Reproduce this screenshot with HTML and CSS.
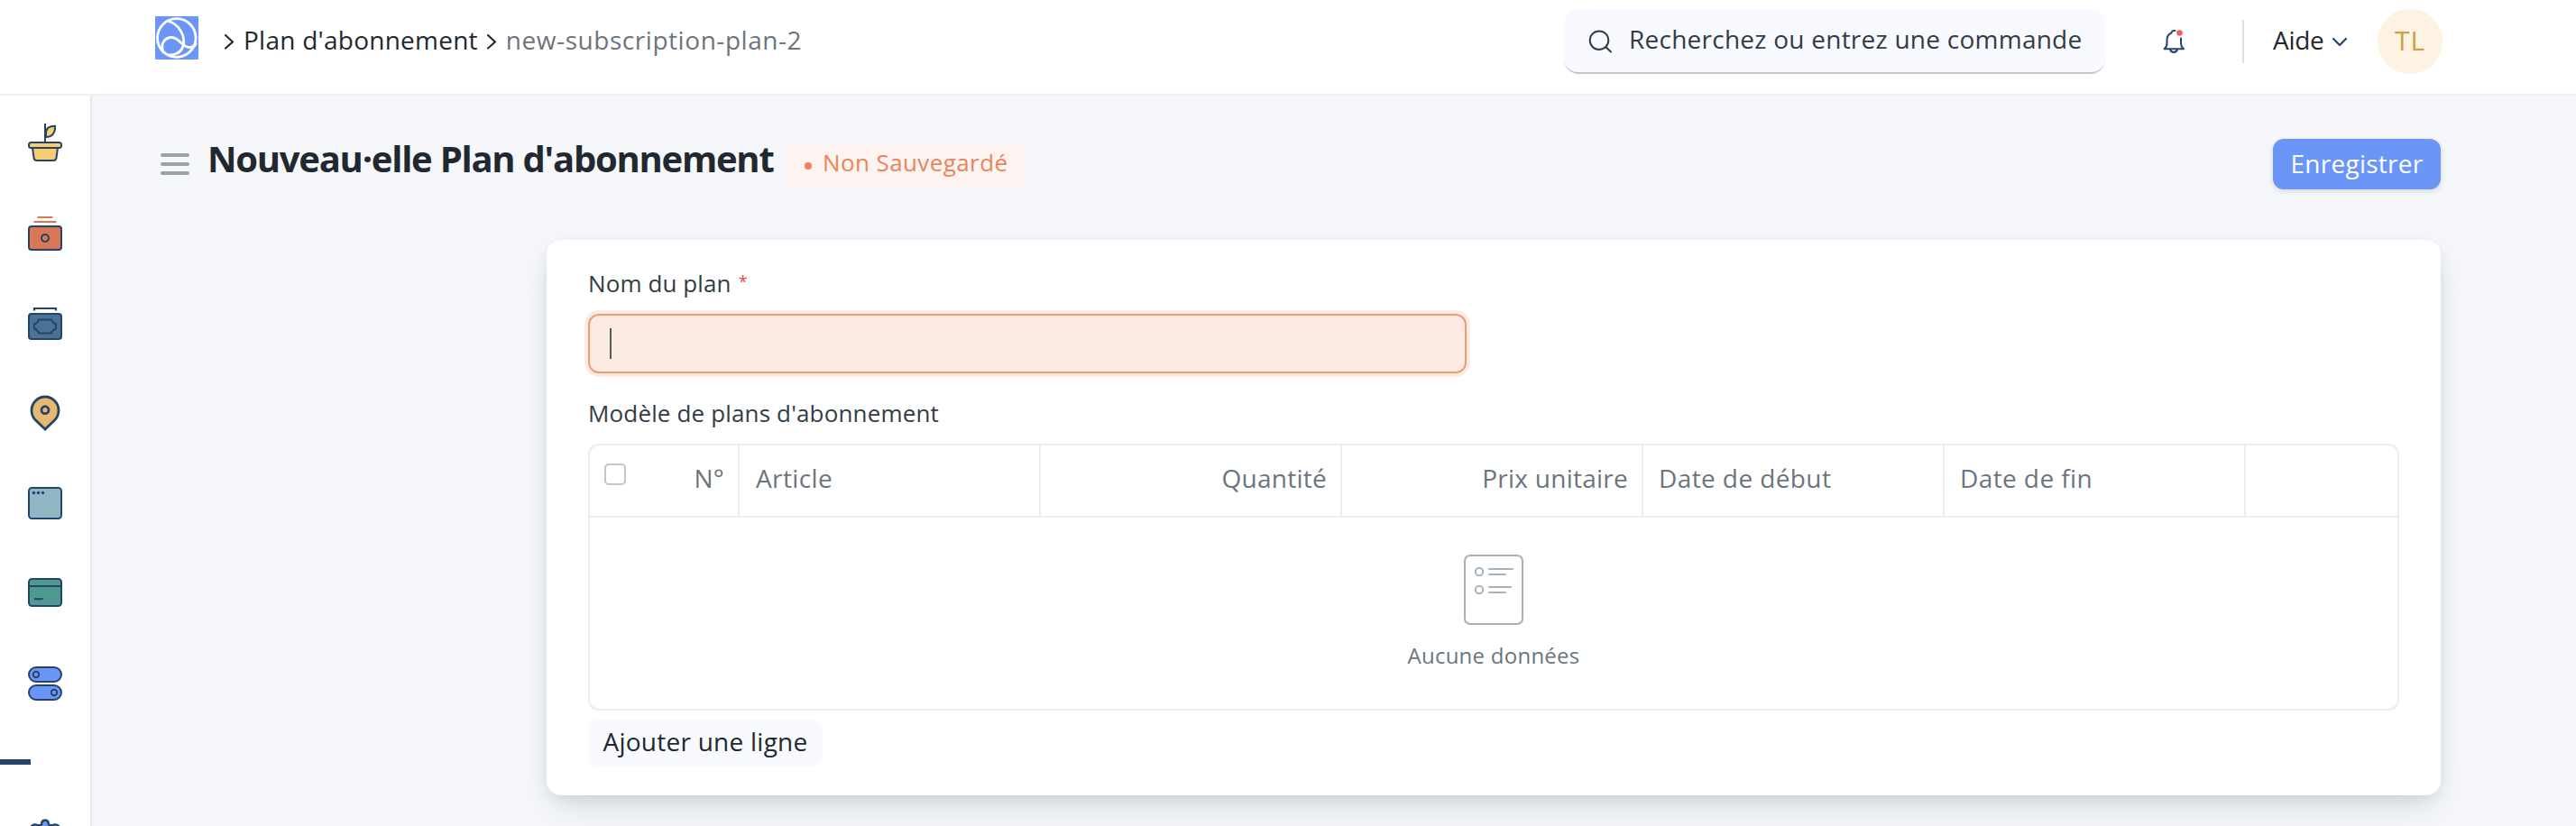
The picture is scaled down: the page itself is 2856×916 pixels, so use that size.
FILE: index.html
```html
<!DOCTYPE html>
<html lang="fr">
<head>
<meta charset="utf-8">
<title>Plan d'abonnement</title>
<link rel="stylesheet" href="styles.css">
</head>
<body>
<header class="navbar">
  <svg class="logo" viewBox="172 18 48 48"><rect x="172" y="18" width="48" height="48" rx="1" fill="#6c95f8"/><g fill="none" stroke="#fff" stroke-width="2.8" stroke-linecap="round"><circle cx="195.800" cy="42" r="21.300"/><path d="M187 23.500C199 27 205 40 203.500 49C202 57 196 61 187 61"/><path d="M181 58C177 47 184 41.500 190 41.500C199 41.500 202 52.500 210 52.500C213 52.500 216 51 217 49"/></g></svg>
  <nav class="crumbs">
    <svg class="crumb-arrow" viewBox="0 0 12 18"><path d="M2 2L10 9.500L2 16.500"/></svg>
    <span class="t crumb-link">Plan d'abonnement</span>
    <svg class="crumb-arrow" viewBox="0 0 12 18"><path d="M2 2L10 9.500L2 16.500"/></svg>
    <span class="t crumb-current">new-subscription-plan-2</span>
  </nav>
  <div class="search">
    <svg class="search-icon" viewBox="1761 33 26 26"><circle cx="1773" cy="44.700" r="10.300"/><path d="M1780.500 52.200L1786 57.500"/></svg>
    <span class="t search-text">Recherchez ou entrez une commande</span>
  </div>
  <svg class="bell" viewBox="2396 30 28 32"><path d="M2411.500 34C2409 33.500 2407.500 35 2407.500 36.500C2404 38 2402.500 41 2402.500 44V48.500C2402.500 51 2401 53 2399.500 54.200H2421C2419 52.500 2418 50.500 2418 48.500V42.500M2406 54.500C2406.500 57 2408.500 58 2410 58C2412 58 2413.500 57 2414 54.500"/><circle class="bell-dot" cx="2416.500" cy="36.500" r="3.300"/></svg>
  <span class="divider"></span>
  <div class="help"><span class="t help-text">Aide</span><svg class="help-arrow" viewBox="0 0 18 12"><path d="M2 2L9 9L16 2"/></svg></div>
  <div class="avatar"><span class="t avatar-text">TL</span></div>
</header>
<div class="shell">
  <aside class="sidebar">
    <svg class="side-icon" viewBox="0 106 100 100"><g fill="#f7cd6d" stroke="#24446a" stroke-width="2"><path d="M50 137V158" stroke-linecap="butt"/><path d="M51 152V147C51 142 55 139.500 61 139.700C61.500 147 58 152 51 152Z"/><path d="M36 164H64L62.500 175Q62 178 59 178H41Q38 178 37.500 175Z"/><rect x="32" y="158" width="36" height="6" rx="2.500"/></g></svg>
    <svg class="side-icon" viewBox="0 206 100 100"><path d="M41.500 241H58.500M37.500 246H62.500" stroke="#d97757" stroke-width="2"/><rect x="32" y="251" width="36" height="26" rx="3" fill="#d97757" stroke="#24446a" stroke-width="2"/><circle cx="50" cy="264" r="4" fill="none" stroke="#24446a" stroke-width="2"/></svg>
    <svg class="side-icon" viewBox="0 306 100 100"><path d="M38 344.500V342H62V344.500" fill="none" stroke="#24446a" stroke-width="2.200"/><rect x="32" y="348" width="36" height="28" rx="3" fill="#4a7295" stroke="#24446a" stroke-width="2"/><path d="M43 354.500H57Q58 358 62 359.500V364.500Q58 366 57 369.500H43Q42 366 38 364.500V359.500Q42 358 43 354.500Z" fill="none" stroke="#24446a" stroke-width="2"/></svg>
    <svg class="side-icon" viewBox="0 406 100 100"><path d="M50 476L39 465.500C35.500 462 35 458 35 455A15 15 0 0 1 65 455C65 458 64.500 462 61 465.500Z" fill="#e6b872" stroke="#24446a" stroke-width="2.800"/><circle cx="50" cy="454.700" r="4" fill="none" stroke="#24446a" stroke-width="2.800"/></svg>
    <svg class="side-icon" viewBox="0 506 100 100"><rect x="32" y="541" width="36" height="34" rx="3.500" fill="#90b6c4" stroke="#24446a" stroke-width="2"/><g fill="#24446a"><circle cx="37.500" cy="546.500" r="1.700"/><circle cx="42.500" cy="546.500" r="1.700"/><circle cx="47.500" cy="546.500" r="1.700"/></g></svg>
    <svg class="side-icon" viewBox="0 606 100 100"><rect x="32" y="642" width="36" height="30" rx="3.500" fill="#4f9a8e" stroke="#24446a" stroke-width="2"/><path d="M32 650H68M38 664.300H47.500" stroke="#24446a" stroke-width="2"/></svg>
    <svg class="side-icon" viewBox="0 706 100 100"><g fill="#6c95f8" stroke="#24446a" stroke-width="2"><rect x="32" y="740" width="36" height="16" rx="8"/><rect x="32" y="760" width="36" height="16" rx="8"/><circle cx="40" cy="748" r="3.200"/><circle cx="60" cy="768" r="3.200"/></g></svg>
    <svg class="side-icon" viewBox="0 806 100 100"><rect x="0" y="842" width="34" height="6" fill="#24446a"/></svg>
    <svg class="side-icon side-cut" viewBox="0 906 100 10"><path d="M33 922Q34 913.500 40 914.500Q43 916 46 914.500Q46 909.500 50 909.500Q54 909.500 54 914.500Q57 916 60 914.500Q66 913.500 67 922Z" fill="#6c95f8" stroke="#24446a" stroke-width="2.400"/></svg>
  </aside>
  <main class="main">
    <div class="page-head">
      <svg class="menu" viewBox="178 169 32 26"><path d="M180 172H208M180 182H208M180 192H208"/></svg>
      <h1 class="t title">Nouveau·elle Plan d'abonnement</h1>
      <div class="badge"><span class="dot"></span><span class="t badge-text">Non Sauvegardé</span></div>
      <button class="save"><span class="t save-text">Enregistrer</span></button>
    </div>
    <section class="card">
      <div class="label"><span class="t label-name">Nom du plan</span><span class="required">*</span></div>
      <div class="input"><span class="caret"></span></div>
      <div class="label"><span class="t label-model">Modèle de plans d'abonnement</span></div>
      <div class="table">
        <div class="row">
          <div class="cell cell-first"><span class="checkbox"></span><span class="t c-num">N°</span></div>
          <div class="cell"><span class="t c-item">Article</span></div>
          <div class="cell cell-right"><span class="t c-qty">Quantité</span></div>
          <div class="cell cell-right"><span class="t c-price">Prix unitaire</span></div>
          <div class="cell"><span class="t c-start">Date de début</span></div>
          <div class="cell"><span class="t c-end">Date de fin</span></div>
          <div class="cell cell-last"></div>
        </div>
        <div class="empty">
          <svg class="empty-icon" viewBox="1623 615 66 78"><rect x="1624" y="616" width="64" height="76" rx="6"/><circle cx="1640" cy="634" r="4.200"/><circle cx="1640" cy="654" r="4.200"/><path d="M1651 631H1677M1651 637H1669M1651 651H1675M1651 657H1669"/></svg>
          <span class="t empty-text">Aucune données</span>
        </div>
      </div>
      <button class="add"><span class="t add-text">Ajouter une ligne</span></button>
    </section>
  </main>
</div>
</body>
</html>
```
FILE: styles.css
```css
* { box-sizing: border-box; }
body { margin: 0; height: 916px; overflow: hidden; background: #f5f7fb; color: #22282f; font-family: "Open Sans", "Noto Sans", sans-serif; font-size: 28px; line-height: 38px; }
svg { display: block; flex: none; }
button { font: inherit; border: 0; margin: 0; }
.t { white-space: nowrap; letter-spacing: 0.25px; }
.navbar { display: flex; align-items: flex-start; height: 106px; padding: 10px 148px 0 172px; background: #fff; border-bottom: 2px solid #edf2f6; }
.logo { width: 48px; height: 48px; margin-top: 8px; }
.crumbs { display: flex; align-items: center; height: 68px; margin-left: 28px; }
.crumb-arrow { width: 12px; height: 18px; margin-top: 4px; fill: none; stroke: #22282f; stroke-width: 2.1; stroke-linecap: round; stroke-linejoin: round; }
.crumb-link { margin: 0 9px 0 10px; }
.crumb-current { margin-left: 10px; color: #6c757d; letter-spacing: 0.55px; }
.search { display: flex; align-items: center; width: 600px; height: 72px; margin-left: auto; padding: 0 27px 4px; background: #f9faff; border-bottom: 2px solid #c0c6cc; border-radius: 16px; color: #333c44; }
.search-icon { width: 26px; height: 26px; margin-top: 6px; fill: none; stroke: #333c44; stroke-width: 2; stroke-linecap: round; }
.search-text { margin-left: 19px; }
.bell { width: 28px; height: 32px; margin: 20px 62px 0 62px; fill: none; stroke: #24446a; stroke-width: 2; stroke-linejoin: round; stroke-linecap: round; }
.bell-dot { fill: #f0605c; stroke: none; }
.divider { width: 2px; height: 48px; margin-top: 12px; background: #dcdfe3; }
.help { display: flex; align-items: center; width: 116px; height: 68px; margin-left: 32px; }
.help-text { letter-spacing: -0.3px; }
.help-arrow { width: 18px; height: 12px; margin: 5px 0 0 9px; fill: none; stroke: #24446a; stroke-width: 2.2; stroke-linecap: round; stroke-linejoin: round; }
.avatar { display: flex; align-items: center; justify-content: center; width: 72px; height: 72px; padding-bottom: 2px; border-radius: 50%; background: #fcf3e3; color: #d1a043; font-size: 30px; }
.avatar-text { letter-spacing: 1px; }
.shell { display: flex; height: 810px; }
.sidebar { width: 102px; flex: none; background: #fff; border-right: 2px solid #e6e9ee; overflow: hidden; }
.side-icon { width: 100px; height: 100px; }
.side-cut { height: 10px; }
.main { flex: 1; padding: 48px 150px 0 76px; }
.page-head { display: flex; align-items: flex-start; height: 112px; }
.menu { width: 32px; height: 26px; margin-top: 15px; fill: none; stroke: #9aa1a8; stroke-width: 4; stroke-linecap: round; }
.title { width: 627px; margin: 0 0 0 20px; font-size: 40px; line-height: 44px; font-weight: 700; letter-spacing: -1.25px; }
.badge { display: flex; align-items: center; width: 266px; height: 48px; margin: 6px 0 0 15px; padding: 0 20px; border-radius: 12px; background: #fdf4f1; color: #e98559; font-size: 26px; }
.dot { flex: none; width: 8px; height: 8px; border-radius: 50%; background: #ed8456; }
.badge-text { margin-left: 12px; padding-bottom: 8px; letter-spacing: 0.4px; }
.save { width: 186px; height: 56px; margin-left: auto; padding: 0 0 2px; border-radius: 12px; background: #6c95f8; color: #fff; box-shadow: 0 2px 6px rgba(25, 39, 52, 0.15); }
.card { width: 2100px; height: 616px; margin-left: 428px; padding: 30px 46px 0; border-radius: 16px; background: #fff; box-shadow: 0 16px 36px -8px rgba(25, 39, 52, 0.17), 0 4px 16px -4px rgba(25, 39, 52, 0.1); }
.label { display: flex; height: 36px; line-height: 36px; font-size: 26px; color: #333c44; }
.label-name { letter-spacing: 0.1px; }
.label-model { letter-spacing: 0.15px; }
.required { margin-left: 8px; color: #e24c4c; font-size: 18px; line-height: 32px; }
.input { display: flex; align-items: center; width: 974px; height: 66px; margin: 16px 0 26px; padding-left: 22px; border: 2px solid #ee9c75; border-radius: 12px; background: #fcebe3; box-shadow: 0 0 0 4px #fcebe3; }
.caret { width: 2px; height: 34px; background: #555b60; }
.table { height: 296px; margin-top: 16px; border: 2px solid #ededed; border-radius: 12px; }
.row { display: grid; grid-template-columns: 166px repeat(5, 334px) 1fr; height: 80px; border-bottom: 2px solid #ededed; color: #6c757d; }
.cell { display: flex; align-items: center; padding: 0 15px 6px 17px; border-right: 2px solid #ededed; }
.cell-right { justify-content: flex-end; }
.cell-first { justify-content: space-between; padding-left: 16px; }
.cell-last { border-right: 0; }
.c-item { margin-left: 1px; }
.c-start, .c-end, .c-item { letter-spacing: 0.4px; }
.checkbox { width: 24px; height: 24px; margin-bottom: 8px; border: 2px solid #c0c6cc; border-radius: 5px; }
.empty { display: flex; flex-direction: column; align-items: center; padding-top: 41px; color: #6c757d; font-size: 24px; line-height: 34px; }
.empty-icon { width: 66px; height: 78px; margin-bottom: 17px; fill: none; stroke: #a6b1b9; stroke-width: 2; stroke-linecap: round; }
.add { display: flex; align-items: center; justify-content: center; width: 260px; height: 52px; margin-top: 10px; padding: 0 0 4px; border-radius: 12px; background: #f9faff; color: #22282f; }
```
